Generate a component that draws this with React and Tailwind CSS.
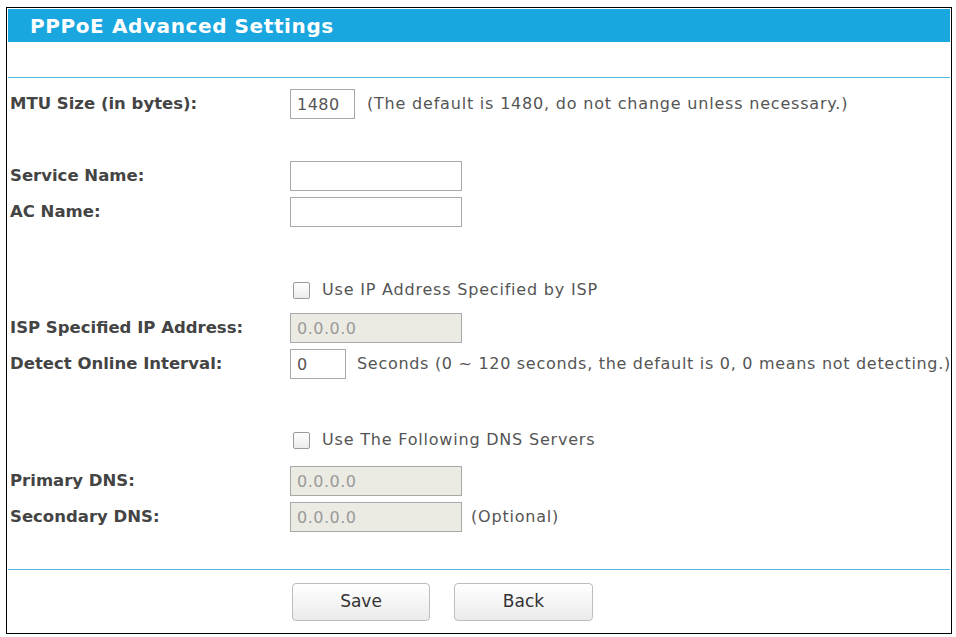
export default function App() {
  const font = { fontFamily: '"DejaVu Sans", Verdana, sans-serif' }
  const label = 'w-[280px] shrink-0 text-[16.5px] font-bold text-[#444]'
  const input = 'h-[30px] border border-[#a8a8a8] bg-white px-[6px] text-[16px] tracking-[0.5px] text-[#555] outline-none'
  const disabled = 'h-[30px] w-[172px] border border-[#a8a8a8] bg-[#ebebe4] px-[6px] text-[16px] tracking-[0.5px] text-[#9a9a9a] outline-none'
  const note = 'text-[16px] text-[#555] whitespace-nowrap'
  const box = 'w-[17px] h-[17px] shrink-0 rounded-[2px] border border-[#9a9a9a] bg-gradient-to-b from-white to-[#ececec]'
  const btn = 'h-[38px] rounded-[4px] border border-[#bdbdbd] bg-gradient-to-b from-white to-[#ebebeb] text-[17px] text-[#333]'

  return (
    <div className="w-[956px] h-[637px] bg-white pl-[6px] pt-[7px]" style={font}>
      <div className="w-[946px] h-[627px] border border-black p-px overflow-hidden">
        <div className="h-[33px] bg-[#1aa6de] pl-[22px] flex items-center text-[20px] tracking-[0.6px] font-bold text-white">
          PPPoE Advanced Settings
        </div>

        <div className="mt-[35px] h-px bg-[#52b8e1]" />

        <div className="px-[2px]">
          <div className="mt-[11px] flex items-center h-[30px]">
            <div className={label}>MTU Size (in bytes):</div>
            <input className={`${input} w-[65px]`} defaultValue="1480" />
            <span className={`${note} tracking-[0.8px] ml-[12px]`}>(The default is 1480, do not change unless necessary.)</span>
          </div>

          <div className="mt-[42px] flex items-center h-[30px]">
            <div className={label}>Service Name:</div>
            <input className={`${input} w-[172px]`} />
          </div>
          <div className="mt-[6px] flex items-center h-[30px]">
            <div className={label}>AC Name:</div>
            <input className={`${input} w-[172px]`} />
          </div>

          <div className="mt-[46px] flex items-center h-[34px]">
            <div className="w-[283px] shrink-0" />
            <span className={box} />
            <span className={`${note} tracking-[0.8px] ml-[12px]`}>Use IP Address Specified by ISP</span>
          </div>

          <div className="mt-[6px] flex items-center h-[30px]">
            <div className={label}>ISP Specified IP Address:</div>
            <input className={disabled} defaultValue="0.0.0.0" disabled />
          </div>
          <div className="mt-[6px] flex items-center h-[30px]">
            <div className={label}>Detect Online Interval:</div>
            <input className={`${input} w-[56px]`} defaultValue="0" />
            <span className={`${note} tracking-[0.7px] ml-[11px]`}>
              Seconds (0 ~ 120 seconds, the default is 0, 0 means not detecting.)
            </span>
          </div>

          <div className="mt-[44px] flex items-center h-[34px]">
            <div className="w-[283px] shrink-0" />
            <span className={box} />
            <span className={`${note} tracking-[0.8px] ml-[12px]`}>Use The Following DNS Servers</span>
          </div>

          <div className="mt-[9px] flex items-center h-[30px]">
            <div className={label}>Primary DNS:</div>
            <input className={disabled} defaultValue="0.0.0.0" disabled />
          </div>
          <div className="mt-[6px] flex items-center h-[30px]">
            <div className={label}>Secondary DNS:</div>
            <input className={disabled} defaultValue="0.0.0.0" disabled />
            <span className={`${note} tracking-[0.8px] ml-[9px]`}>(Optional)</span>
          </div>
        </div>

        <div className="mt-[37px] h-px bg-[#52b8e1]" />

        <div className="mt-[13px] flex gap-[24px] pl-[284px]">
          <button className={`${btn} w-[138px]`}>Save</button>
          <button className={`${btn} w-[139px]`}>Back</button>
        </div>
      </div>
    </div>
  )
}
